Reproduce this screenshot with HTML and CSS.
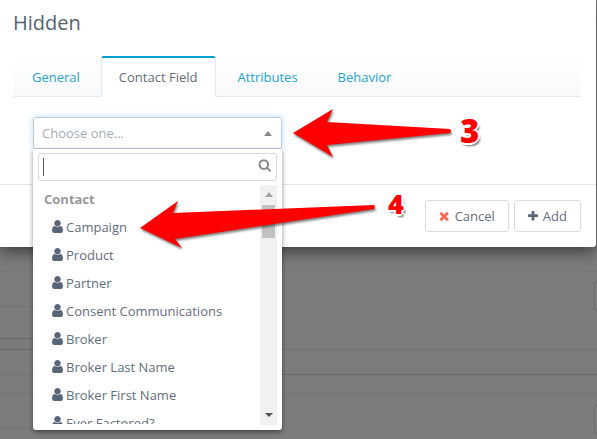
FILE: index.html
```html
<!DOCTYPE html>
<html lang="en">
  <head>
    <meta charset="UTF-8" />
    <meta name="viewport" content="width=device-width, initial-scale=1.0" />
    <title>Hidden</title>
    <link rel="stylesheet" href="styles.css">
  </head>
  <body>
    <svg class="icon-defs" aria-hidden="true">
      <symbol id="i-user" viewBox="256 128 1280 1536"><path d="M1536 1399q0 109-62.500 187t-150.500 78h-854q-88 0-150.500-78t-62.500-187q0-85 8.500-160.500t31.500-152 58.500-131 94-89 134.500-34.500q131 128 313 128t313-128q76 0 134.500 34.500t94 89 58.500 131 31.500 152 8.500 160.500zm-256-887q0 159-112.500 271.500t-271.500 112.500-271.500-112.500-112.500-271.500 112.500-271.500 271.500-112.500 271.500 112.500 112.500 271.500z"/></symbol>
      <symbol id="i-times" viewBox="258 238 1232 1316"><path d="M1490 1322q0 40-28 68l-136 136q-28 28-68 28t-68-28l-294-294-294 294q-28 28-68 28t-68-28l-136-136q-28-28-28-68t28-68l294-294-294-294q-28-28-28-68t28-68l136-136q28-28 68-28t68 28l294 294 294-294q28-28 68-28t68 28l136 136q28 28 28 68t-28 68l-294 294 294 294q28 28 28 68z"/></symbol>
      <symbol id="i-plus" viewBox="192 192 1408 1408"><path d="M1600 736v192q0 40-28 68t-68 28h-416v416q0 40-28 68t-68 28h-192q-40 0-68-28t-28-68v-416h-416q-40 0-68-28t-28-68v-192q0-40 28-68t68-28h416v-416q0-40 28-68t68-28h192q40 0 68 28t28 68v416h416q40 0 68 28t28 68z"/></symbol>
      <symbol id="i-search" viewBox="0 128 1728 1664"><path d="M1216 832q0-185-131.500-316.500t-316.500-131.500-316.500 131.500-131.500 316.500 131.500 316.500 316.500 131.500 316.500-131.500 131.500-316.500zm512 832q0 52-38 90t-90 38q-54 0-90-38l-343-342q-179 124-399 124-143 0-273.500-55.500t-225-150-150-225-55.500-273.500 55.500-273.500 150-225 225-150 273.500-55.500 273.500 55.500 225 150 150 225 55.500 273.500q0 220-124 399l343 343q37 37 37 90z"/></symbol>
    </svg>

    <div class="modal">
      <div class="modal-head">Hidden</div>

      <div class="tabs">
        <a class="tab">General</a>
        <a class="tab active">Contact Field</a>
        <a class="tab">Attributes</a>
        <a class="tab">Behavior</a>
      </div>

      <div class="select-wrap">
        <div class="select">
          <span>Choose one...</span>
          <i class="tri-up"></i>
        </div>

        <div class="drop">
          <div class="drop-search">
            <i class="cursor"></i>
            <svg class="search-icon"><use href="#i-search"></use></svg>
          </div>
          <div class="drop-body">
            <ul class="drop-list">
              <li class="group">Contact</li>
              <li><svg class="user-icon"><use href="#i-user"></use></svg>Campaign</li>
              <li><svg class="user-icon"><use href="#i-user"></use></svg>Product</li>
              <li><svg class="user-icon"><use href="#i-user"></use></svg>Partner</li>
              <li><svg class="user-icon"><use href="#i-user"></use></svg>Consent Communications</li>
              <li><svg class="user-icon"><use href="#i-user"></use></svg>Broker</li>
              <li><svg class="user-icon"><use href="#i-user"></use></svg>Broker Last Name</li>
              <li><svg class="user-icon"><use href="#i-user"></use></svg>Broker First Name</li>
              <li><svg class="user-icon"><use href="#i-user"></use></svg>Ever Factored?</li>
            </ul>
            <div class="scrollbar">
              <i class="tri-up small"></i>
              <div class="thumb"></div>
              <i class="tri-down"></i>
            </div>
          </div>
        </div>
      </div>

      <div class="modal-foot">
        <button class="btn"><svg class="btn-icon cancel"><use href="#i-times"></use></svg>Cancel</button>
        <button class="btn"><svg class="btn-icon"><use href="#i-plus"></use></svg>Add</button>
      </div>
    </div>

    <div class="backdrop">
      <div class="back-left">
        <div class="row r36"></div>
        <div class="row r32 dark"></div>
        <div class="row r11 dark"></div>
        <div class="row r25"></div>
        <div class="row r19"></div>
        <div class="row r35"></div>
        <div class="row r11 dark"></div>
      </div>
      <div class="back-right">
        <div class="row r79"><div class="stub"></div></div>
        <div class="row r25 dark"></div>
        <div class="row r19"></div>
        <div class="row r46"><div class="stub"></div></div>
      </div>
    </div>

    <svg class="arrows" viewBox="0 0 597 439" aria-hidden="true">
      <polygon points="293,133 333,109 327,122 450,129 451,131 450,133 327,145 333,157" />
      <polygon points="140,228 178,201 173,213 374,205 375,207 374,209 175,239 182,248" />
    </svg>
    <span class="callout three">3</span>
    <span class="callout four">4</span>
  </body>
</html>
```

FILE: styles.css
```css
* {
  margin: 0;
  padding: 0;
  box-sizing: border-box;
}

body {
  font-family: "Open Sans", sans-serif;
  font-size: 13px;
  color: #5f6e7e;
  background: #7c7c7c;
  height: 439px;
  overflow: hidden;
  position: relative;
}

.icon-defs {
  display: none;
}

.modal {
  width: 596px;
  height: 247px;
  background: #fff;
  border-radius: 0 0 3px 0;
  box-shadow: 0 5px 15px rgba(0, 0, 0, 0.5);
  position: relative;
  z-index: 1;
}

.modal-head {
  height: 56px;
  padding: 9px 13px 0;
  font-size: 20px;
  line-height: 28px;
  color: #56636f;
}

/* tabs */
.tabs {
  display: flex;
  height: 41px;
  margin: 0 15px 0 13px;
  padding-left: 1px;
  background: linear-gradient(#fff, #f8f9fb);
  border-bottom: 1px solid #e6e9ee;
}

.tab {
  height: 41px;
  line-height: 40px;
  padding: 0 18px 0 17px;
  margin-right: 3px;
  border: 1px solid transparent;
  color: #1da3d0;
}

.tab:first-child {
  margin-right: 2px;
}

.tab.active {
  background: #fff;
  color: #5f6e7e;
  border-color: #e6e9ee;
  border-top: 2px solid #00a0d2;
  border-bottom-color: #fff;
  border-radius: 3px 3px 0 0;
  line-height: 38px;
}

/* select */
.select-wrap {
  position: relative;
  width: 249px;
  margin: 20px 0 35px 33px;
}

.select {
  height: 32px;
  padding: 0 9px 0 8px;
  display: flex;
  align-items: center;
  justify-content: space-between;
  border: 1px solid #c5ced8;
  border-radius: 3px 3px 0 0;
  color: #a3aeb9;
  box-shadow: 0 0 6px rgba(100, 180, 235, 0.45);
}

.tri-up {
  width: 0;
  height: 0;
  border-left: 4px solid transparent;
  border-right: 4px solid transparent;
  border-bottom: 5px solid #888;
}

.tri-up.small {
  border-bottom-color: #a3a3a3;
  margin: 7px 0 8px;
}

.tri-down {
  width: 0;
  height: 0;
  margin: auto 0 8px;
  border-left: 4px solid transparent;
  border-right: 4px solid transparent;
  border-top: 4px solid #505050;
}

.drop {
  position: absolute;
  top: 32px;
  left: 0;
  width: 249px;
  height: 281px;
  padding: 4px 5px 5px 5px;
  background: #fff;
  border-radius: 0 0 3px 3px;
  box-shadow: 0 2px 5px rgba(0, 0, 0, 0.45);
  display: flex;
  flex-direction: column;
}

.drop-search {
  height: 28px;
  flex: none;
  padding: 0 5px 0 4px;
  display: flex;
  align-items: center;
  justify-content: space-between;
  border: 1px solid #d4d8dc;
  border-radius: 3px;
}

.cursor {
  width: 1px;
  height: 18px;
  background: #4a5663;
}

.search-icon {
  width: 13px;
  height: 13px;
  margin-top: -3px;
  fill: #8a8a8a;
}

.drop-body {
  flex: 1;
  min-height: 0;
  display: flex;
  margin-top: 4px;
}

.drop-list {
  flex: 1;
  list-style: none;
  overflow: hidden;
  height: 239px;
}

.drop-list li {
  height: 28px;
  line-height: 28px;
  padding-left: 14px;
  display: flex;
  align-items: center;
  white-space: nowrap;
}

.drop-list li.group {
  padding-left: 6px;
  font-weight: 700;
  color: #999;
}

.user-icon {
  width: 11px;
  height: 13px;
  margin-right: 3px;
  margin-top: -2px;
  fill: #566577;
}

.scrollbar {
  width: 17px;
  flex: none;
  background: #f1f1f1;
  display: flex;
  flex-direction: column;
  align-items: center;
}

.thumb {
  width: 13px;
  height: 33px;
  background: #c1c1c1;
}

/* footer */
.modal-foot {
  height: 63px;
  padding: 15px 15px 0 0;
  display: flex;
  justify-content: flex-end;
  gap: 5px;
  border-top: 1px solid #e5e5e5;
}

.btn {
  height: 32px;
  padding: 0 13px;
  display: flex;
  align-items: center;
  background: #fff;
  border: 1px solid #d8dde3;
  border-radius: 3px;
  font: 400 13px "Open Sans", sans-serif;
  color: #5f6e7e;
}

.btn-icon {
  width: 10px;
  height: 10px;
  margin-right: 5px;
  fill: #566577;
}

.btn-icon.cancel {
  fill: #f8694f;
  margin-right: 6px;
}

/* page behind the modal */
.backdrop {
  position: absolute;
  top: 247px;
  left: 0;
  width: 597px;
  height: 192px;
  padding-top: 23px;
  display: flex;
}

.back-left {
  width: 269px;
  flex: none;
  border-top: 1px solid #747474;
}

.back-right {
  flex: 1;
  border-top: 1px solid #747474;
}

.row {
  border-bottom: 1px solid #747474;
  display: flex;
  justify-content: flex-end;
}

.row.dark {
  border-bottom-color: #696969;
}

.r11 { height: 11px; }
.r19 { height: 19px; }
.r25 { height: 25px; }
.r32 { height: 32px; }
.r35 { height: 35px; }
.r36 { height: 36px; }
.r46 { height: 46px; }
.r79 { height: 79px; }

.stub {
  width: 3px;
  height: 30px;
  margin-top: 10px;
  border: 1px solid #6d6d6d;
  border-right: 0;
  border-radius: 3px 0 0 3px;
}

/* annotations */
.arrows {
  position: absolute;
  top: 0;
  left: 0;
  width: 597px;
  height: 439px;
  z-index: 2;
  fill: #fe0000;
  filter: drop-shadow(1px 2px 1px rgba(0, 0, 0, 0.5));
}

.callout {
  position: absolute;
  z-index: 3;
  font-family: "Open Sans", sans-serif;
  font-weight: 800;
  line-height: 1;
  color: #fe0000;
  text-shadow: -1px -1px 0 #fff, 1px -1px 0 #fff, -1px 1px 0 #fff, 1px 1px 0 #fff,
    0 -2px 0 #fff, 2px 0 0 #fff, 0 2px 0 #fff, -2px 0 0 #fff,
    2px 3px 2px rgba(0, 0, 0, 0.55);
}

.three {
  top: 114px;
  left: 460px;
  font-size: 33px;
}

.four {
  top: 190px;
  left: 388px;
  font-size: 27px;
}
```
